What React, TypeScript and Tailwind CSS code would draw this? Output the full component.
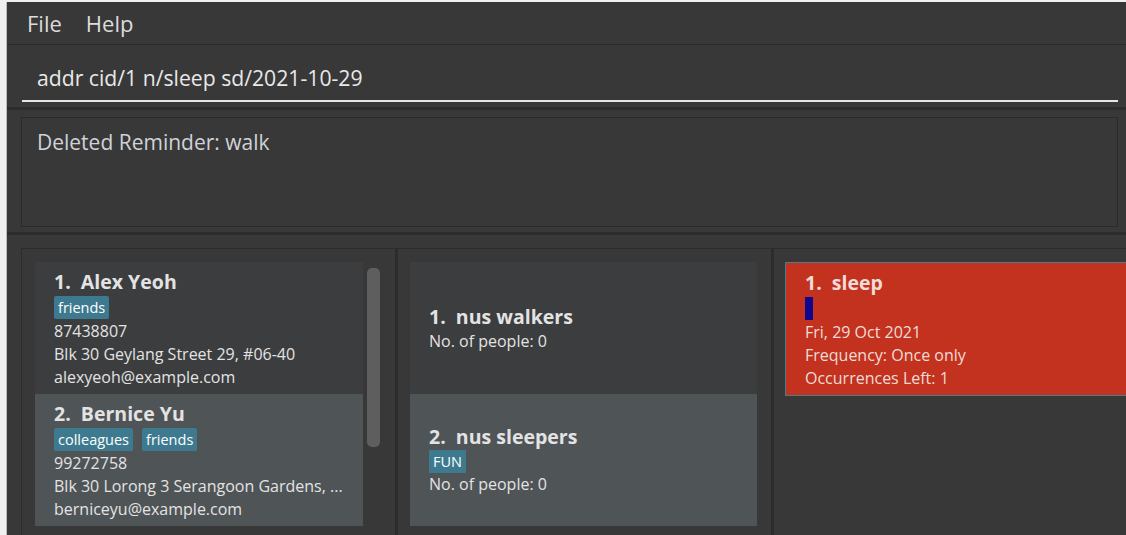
const persons = [
  {
    name: 'Alex Yeoh',
    tags: ['friends'],
    phone: '87438807',
    address: 'Blk 30 Geylang Street 29, #06-40',
    email: 'alexyeoh@example.com',
  },
  {
    name: 'Bernice Yu',
    tags: ['colleagues', 'friends'],
    phone: '99272758',
    address: 'Blk 30 Lorong 3 Serangoon Gardens, ...',
    email: 'berniceyu@example.com',
  },
];

const groups = [
  { name: 'nus walkers', tags: [] as string[], people: 0 },
  { name: 'nus sleepers', tags: ['FUN'], people: 0 },
];

const font = { fontFamily: '"Open Sans", "Noto Sans", sans-serif' };

const App = () => {
  return (
    <div className="w-[1126px] h-[535px] bg-[#f0f0f0] pt-[2px] pl-[6px] overflow-hidden" style={font}>
      <div className="h-[533px] bg-[#383838] border-l border-[#bdbdbd] flex flex-col">
        {/* Menu */}
        <div className="h-[43px] flex items-center gap-[24px] pl-[20px] border-b border-[#2c2c2c] text-[22px] text-[#dcdcdc]">
          <span>File</span>
          <span>Help</span>
        </div>

        {/* Command box */}
        <div className="h-[62px] px-[15px] pr-[8px] pt-[17px]">
          <div className="border-b-2 border-[#e6e6e6] pl-[15px] pb-[6px] text-[21.2px] text-[#e8e8e8] leading-[32px]">
            addr cid/1 n/sleep sd/2021-10-29
          </div>
        </div>
        <div className="h-[3px] bg-[#2c2c2c]" />

        {/* Result display */}
        <div className="h-[122px] px-[14px] pr-[8px] pt-[7px]">
          <div className="h-[110px] border border-[#2a2a2a] px-[15px] pt-[10px] text-[21px] text-[#cfd3d8] leading-[28px]">
            Deleted Reminder: walk
          </div>
        </div>
        <div className="h-[3px] bg-[#2c2c2c]" />

        {/* Lists */}
        <div className="flex-1 flex min-h-0">
          {/* Persons */}
          <div className="w-[388px] pt-[13px] pl-[14px]">
            <div className="h-full border-l border-t border-[#2c2c2c] pt-[13px] pl-[13px] flex gap-[4px]">
              <div className="w-[328px] flex flex-col">
                {persons.map((p, i) => (
                  <div
                    key={p.name}
                    className={`h-[132px] shrink-0 pl-[19px] pt-[7px] text-[#e3e3e3] ${i % 2 === 0 ? 'bg-[#3c3d3f]' : 'bg-[#4f5457]'}`}
                  >
                    <div className="text-[19.5px] font-bold leading-[26px]">
                      {i + 1}.&nbsp; {p.name}
                    </div>
                    <div className="flex gap-[9px] mt-[1px]">
                      {p.tags.map((t) => (
                        <span key={t} className="h-[23px] px-[4px] rounded-[2px] bg-[#3e7a8f] text-white text-[14.5px] leading-[23px]">
                          {t}
                        </span>
                      ))}
                    </div>
                    <div className="mt-[1px] text-[16px] leading-[23px] whitespace-nowrap">
                      <div>{p.phone}</div>
                      <div>{p.address}</div>
                      <div>{p.email}</div>
                    </div>
                  </div>
                ))}
              </div>
              <div className="pt-[6px]">
                <div className="w-[13px] h-[179px] rounded-[5px] bg-[#5e5e5e]" />
              </div>
            </div>
          </div>
          <div className="w-[2px] mt-[13px] bg-[#2c2c2c]" />

          {/* Groups */}
          <div className="w-[374px] pt-[13px]">
            <div className="h-full border-l border-t border-[#2c2c2c] pt-[13px] pl-[12px] pr-[14px]">
              {groups.map((g, i) => (
                <div
                  key={g.name}
                  className={`h-[132px] pl-[19px] flex flex-col justify-center text-[#e3e3e3] ${i % 2 === 0 ? 'bg-[#3c3d3f]' : 'bg-[#4f5457]'}`}
                >
                  <div className="text-[19.5px] font-bold leading-[26px]">
                    {i + 1}.&nbsp; {g.name}
                  </div>
                  {g.tags.length > 0 && (
                    <div className="flex gap-[9px]">
                      {g.tags.map((t) => (
                        <span key={t} className="h-[23px] px-[4px] bg-[#3e7a8f] text-white text-[14.5px] leading-[23px]">
                          {t}
                        </span>
                      ))}
                    </div>
                  )}
                  <div className="text-[16px] leading-[23px]">No. of people: {g.people}</div>
                </div>
              ))}
            </div>
          </div>
          <div className="w-[2px] mt-[13px] bg-[#2c2c2c]" />

          {/* Reminders */}
          <div className="flex-1 pt-[13px]">
            <div className="h-full border-l border-t border-[#2c2c2c] pt-[13px] pl-[11px]">
              <div className="h-[134px] bg-[#c3321e] border border-[#4a7d8c] border-r-0 pl-[19px] pt-[7px] text-[#f0dcd8]">
                <div className="text-[19.5px] font-bold leading-[26px]">1.&nbsp; sleep</div>
                <div className="w-[8px] h-[23px] bg-[#10058e] mt-[1px]" />
                <div className="mt-[1px] text-[16px] leading-[23px]">
                  <div>Fri, 29 Oct 2021</div>
                  <div>Frequency: Once only</div>
                  <div>Occurrences Left: 1</div>
                </div>
              </div>
            </div>
          </div>
        </div>
      </div>
    </div>
  );
};

export default App;
